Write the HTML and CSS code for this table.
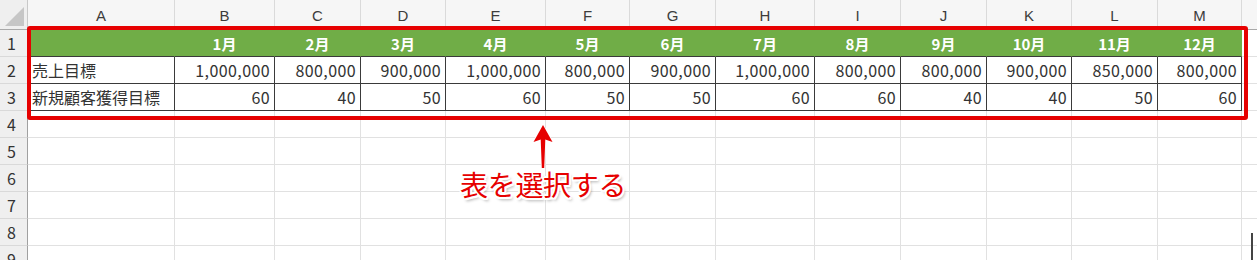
FILE: index.html
```html
<!DOCTYPE html>
<html lang="ja">
<head>
<meta charset="utf-8">
<title>表を選択する</title>
<link rel="stylesheet" href="styles.css">
</head>
<body>
<div class="sheet">
  <div class="grid">
    <div class="corner"><span class="tri"></span></div>
    <div class="ch">A</div><div class="ch">B</div><div class="ch">C</div><div class="ch">D</div><div class="ch">E</div><div class="ch">F</div><div class="ch">G</div><div class="ch">H</div><div class="ch">I</div><div class="ch">J</div><div class="ch">K</div><div class="ch">L</div><div class="ch">M</div><div class="ch"></div>

    <div class="rh">1</div>
    <div class="h"></div><div class="h">1月</div><div class="h">2月</div><div class="h">3月</div><div class="h">4月</div><div class="h">5月</div><div class="h">6月</div><div class="h">7月</div><div class="h">8月</div><div class="h">9月</div><div class="h">10月</div><div class="h">11月</div><div class="h">12月</div><div class="c"></div>

    <div class="rh">2</div>
    <div class="d txt">売上目標</div><div class="d num">1,000,000</div><div class="d num">800,000</div><div class="d num">900,000</div><div class="d num">1,000,000</div><div class="d num">800,000</div><div class="d num">900,000</div><div class="d num">1,000,000</div><div class="d num">800,000</div><div class="d num">800,000</div><div class="d num">900,000</div><div class="d num">850,000</div><div class="d num">800,000</div><div class="c"></div>

    <div class="rh">3</div>
    <div class="d txt">新規顧客獲得目標</div><div class="d num">60</div><div class="d num">40</div><div class="d num">50</div><div class="d num">60</div><div class="d num">50</div><div class="d num">50</div><div class="d num">60</div><div class="d num">60</div><div class="d num">40</div><div class="d num">40</div><div class="d num">50</div><div class="d num">60</div><div class="c"></div>

    <div class="rh">4</div>
    <div class="c"></div><div class="c"></div><div class="c"></div><div class="c"></div><div class="c"></div><div class="c"></div><div class="c"></div><div class="c"></div><div class="c"></div><div class="c"></div><div class="c"></div><div class="c"></div><div class="c"></div><div class="c"></div>

    <div class="rh">5</div>
    <div class="c"></div><div class="c"></div><div class="c"></div><div class="c"></div><div class="c"></div><div class="c"></div><div class="c"></div><div class="c"></div><div class="c"></div><div class="c"></div><div class="c"></div><div class="c"></div><div class="c"></div><div class="c"></div>

    <div class="rh">6</div>
    <div class="c"></div><div class="c"></div><div class="c"></div><div class="c"></div><div class="c"></div><div class="c"></div><div class="c"></div><div class="c"></div><div class="c"></div><div class="c"></div><div class="c"></div><div class="c"></div><div class="c"></div><div class="c"></div>

    <div class="rh">7</div>
    <div class="c"></div><div class="c"></div><div class="c"></div><div class="c"></div><div class="c"></div><div class="c"></div><div class="c"></div><div class="c"></div><div class="c"></div><div class="c"></div><div class="c"></div><div class="c"></div><div class="c"></div><div class="c"></div>

    <div class="rh">8</div>
    <div class="c"></div><div class="c"></div><div class="c"></div><div class="c"></div><div class="c"></div><div class="c"></div><div class="c"></div><div class="c"></div><div class="c"></div><div class="c"></div><div class="c"></div><div class="c"></div><div class="c"></div><div class="c"></div>

    <div class="rh">9</div>
    <div class="c"></div><div class="c"></div><div class="c"></div><div class="c"></div><div class="c"></div><div class="c"></div><div class="c"></div><div class="c"></div><div class="c"></div><div class="c"></div><div class="c"></div><div class="c"></div><div class="c"></div><div class="c"></div>
  </div>

  <div class="highlight"></div>
  <svg class="arrow" width="24" height="50" viewBox="531 122 24 50">
    <path d="M543 125 L552.5 142 L545.3 139.5 L544.2 168 L541.8 168 L540.7 139.5 L533.5 142 Z"/>
  </svg>
  <div class="label">表を選択する</div>
  <div class="cursor"></div>
</div>
</body>
</html>
```

FILE: styles.css
```css
html, body {
  margin: 0;
  padding: 0;
  background: #ffffff;
}

body {
  width: 1257px;
  height: 260px;
  overflow: hidden;
}

.sheet {
  position: relative;
  width: 1257px;
  height: 260px;
  overflow: hidden;
  font-family: "Noto Sans CJK JP", "Noto Sans", sans-serif;
}

.grid {
  display: grid;
  grid-template-columns: 28px 147px 100px 86px 85px 100px 84px 86px 99px 86px 86px 85px 86px 84px 86px;
  grid-template-rows: 30px repeat(9, 27px);
}

.grid > div {
  box-sizing: border-box;
  overflow: hidden;
  white-space: nowrap;
}

.corner {
  position: relative;
  background: #efefef;
  border-right: 1px solid #c8c8c8;
  border-bottom: 1px solid #a9a9a9;
}

.tri {
  position: absolute;
  right: 3px;
  bottom: 3px;
  width: 0;
  height: 0;
  border-style: solid;
  border-width: 0 0 19px 19px;
  border-color: transparent transparent #c6c6c6 transparent;
}

.ch {
  background: #f6f6f6;
  border-right: 1px solid #dadada;
  border-bottom: 1px solid #a9a9a9;
  color: #3c3c3c;
  font-family: "Liberation Sans", Arial, sans-serif;
  font-size: 15px;
  display: flex;
  align-items: center;
  justify-content: center;
  padding-top: 2px;
}

.rh {
  background: #efefef;
  border-right: 1px solid #a0a0a0;
  border-bottom: 1px solid #d9d9d9;
  color: #333333;
  font-size: 16px;
  display: flex;
  align-items: center;
  justify-content: center;
  padding-right: 4px;
}

.c {
  border-right: 1px solid #e1e1e1;
  border-bottom: 1px solid #e1e1e1;
}

.h {
  background: #70ad47;
  border-right: 1px solid #70ad47;
  border-bottom: 1px solid #3a3a3a;
  color: #ffffff;
  font-weight: 700;
  font-size: 15px;
  display: flex;
  align-items: center;
  justify-content: center;
}

.d {
  border-right: 1px solid #3a3a3a;
  border-bottom: 1px solid #3a3a3a;
  color: #333333;
  font-size: 16px;
  display: flex;
  align-items: center;
}

.txt {
  justify-content: flex-start;
  padding-left: 3px;
  border-left: 1px solid #3a3a3a;
}

.num {
  justify-content: flex-end;
  padding-right: 4px;
  letter-spacing: 0.4px;
}

.highlight {
  position: absolute;
  left: 27px;
  top: 26px;
  width: 1221px;
  height: 94px;
  box-sizing: border-box;
  border: 4px solid #e60000;
  border-radius: 3px;
}

.arrow {
  position: absolute;
  left: 531px;
  top: 122px;
  overflow: visible;
}

.arrow path {
  fill: #e60000;
  stroke: #ffffff;
  stroke-width: 1.5;
  stroke-linejoin: round;
  paint-order: stroke;
}

.label {
  position: absolute;
  left: 460px;
  top: 166px;
  font-size: 28px;
  line-height: 36px;
  color: #e60000;
  letter-spacing: -0.3px;
  text-shadow:
    -1.5px -1.5px 0 #fff, 1.5px -1.5px 0 #fff, -1.5px 1.5px 0 #fff, 1.5px 1.5px 0 #fff,
    0 -2px 0 #fff, 0 2px 0 #fff, -2px 0 0 #fff, 2px 0 0 #fff,
    2px 3px 3px rgba(0, 0, 0, 0.35);
}

.cursor {
  position: absolute;
  left: 1251px;
  top: 233px;
  width: 2px;
  height: 27px;
  background: #444444;
}
```
